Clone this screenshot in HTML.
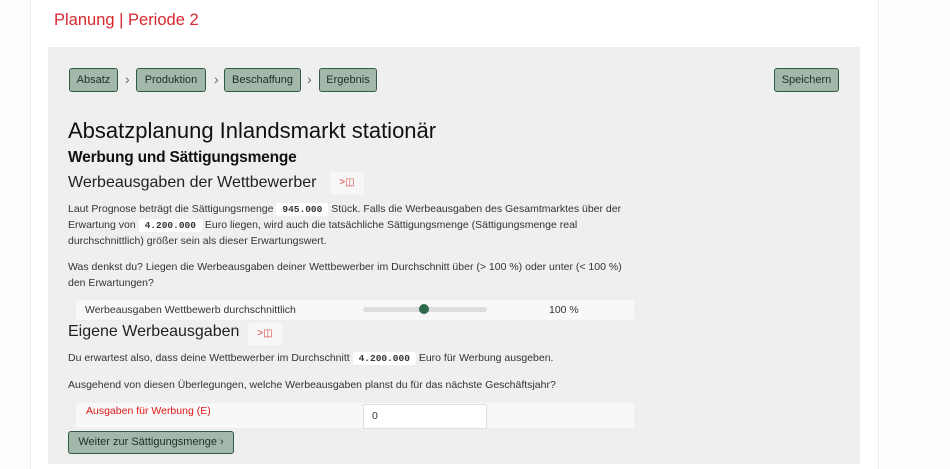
<!DOCTYPE html>
<html><head><meta charset="utf-8"><style>
*{margin:0;padding:0;box-sizing:border-box}
body{width:950px;height:469px;background:#fdfdfd;font-family:"Liberation Sans",sans-serif;position:relative;overflow:hidden;color:#222}
.a{position:absolute;white-space:nowrap}
.wrap{position:absolute;left:30px;top:0;width:849px;height:469px;background:#fff;border-left:1px solid #eee;border-right:1px solid #eee}
.panel{position:absolute;left:48px;top:47px;width:812px;height:417px;background:#efefef}
.btn{position:absolute;top:68px;height:24px;background:#a3b8ab;border:1px solid #2f5a43;border-radius:3px;font-size:11px;line-height:22px;text-align:center;color:#1f2f26}
.sep{position:absolute;top:71px;font-size:14px;color:#666}
.p{font-size:10.5px;color:#333}
code{font-family:"Liberation Mono",monospace;font-weight:bold;font-size:9.5px;background:#fff;padding:1px 6px;border-radius:2px}
.ic{position:absolute;width:34px;height:22px;background:#f7f7f7;border-radius:3px;color:#d44;font-size:10px;line-height:22px;text-align:center}
.row{position:absolute;background:#f8f8f8;border-radius:3px}
</style></head><body>
<div class="wrap"></div>
<div class="a" style="left:54px;top:11px;font-size:16.5px;color:#d7282f">Planung | Periode 2</div>
<div class="panel"></div>
<div class="btn" style="left:69px;width:49px">Absatz</div>
<div class="sep" style="left:125px">›</div>
<div class="btn" style="left:136px;width:70px">Produktion</div>
<div class="sep" style="left:214px">›</div>
<div class="btn" style="left:224px;width:77px">Beschaffung</div>
<div class="sep" style="left:307px">›</div>
<div class="btn" style="left:319px;width:58px">Ergebnis</div>
<div class="btn" style="left:774px;width:65px">Speichern</div>
<div class="a" style="left:68px;top:118px;font-size:22px;color:#111">Absatzplanung Inlandsmarkt stationär</div>
<div class="a" style="left:68px;top:149px;font-size:15.5px;color:#111;font-weight:bold;letter-spacing:-0.2px">Werbung und Sättigungsmenge</div>
<div class="a" style="left:68px;top:174px;font-size:16px;color:#222">Werbeausgaben der Wettbewerber</div>
<div class="ic" style="left:330px;top:172px">&gt;&#9707;</div>
<div class="a p" style="left:68px;top:203px">Laut Prognose beträgt die Sättigungsmenge <code>945.000</code> Stück. Falls die Werbeausgaben des Gesamtmarktes über der</div>
<div class="a p" style="left:68px;top:219px">Erwartung von <code>4.200.000</code> Euro liegen, wird auch die tatsächliche Sättigungsmenge (Sättigungsmenge real</div>
<div class="a p" style="left:68px;top:235px">durchschnittlich) größer sein als dieser Erwartungswert.</div>
<div class="a p" style="left:68px;top:261px">Was denkst du? Liegen die Werbeausgaben deiner Wettbewerber im Durchschnitt über (&gt; 100 %) oder unter (&lt; 100 %)</div>
<div class="a p" style="left:68px;top:277px">den Erwartungen?</div>
<div class="row" style="left:76px;top:300px;width:558px;height:20px"></div>
<div class="a p" style="left:85px;top:304px">Werbeausgaben Wettbewerb durchschnittlich</div>
<div class="a" style="left:363px;top:307px;width:124px;height:5px;background:#ddd;border-radius:3px"></div>
<div class="a" style="left:419px;top:304px;width:10px;height:10px;background:#2e6a4a;border-radius:50%"></div>
<div class="a p" style="left:549px;top:304px">100 %</div>
<div class="a" style="left:68px;top:323px;font-size:16px;color:#222">Eigene Werbeausgaben</div>
<div class="ic" style="left:248px;top:323px">&gt;&#9707;</div>
<div class="a p" style="left:68px;top:352px">Du erwartest also, dass deine Wettbewerber im Durchschnitt <code>4.200.000</code> Euro für Werbung ausgeben.</div>
<div class="a p" style="left:68px;top:379px">Ausgehend von diesen Überlegungen, welche Werbeausgaben planst du für das nächste Geschäftsjahr?</div>
<div class="row" style="left:76px;top:403px;width:558px;height:25px"></div>
<div class="a" style="left:86px;top:405px;font-size:10.5px;color:#e01818">Ausgaben für Werbung (E)</div>
<div class="a" style="left:363px;top:404px;width:124px;height:25px;background:#fff;border:1px solid #ddd;border-radius:2px;font-size:10.5px;line-height:23px;padding-left:8px;color:#333">0</div>
<div class="btn" style="left:68px;top:431px;width:166px;height:23px;line-height:21px;font-size:11px">Weiter zur Sättigungsmenge ›</div>
</body></html>
